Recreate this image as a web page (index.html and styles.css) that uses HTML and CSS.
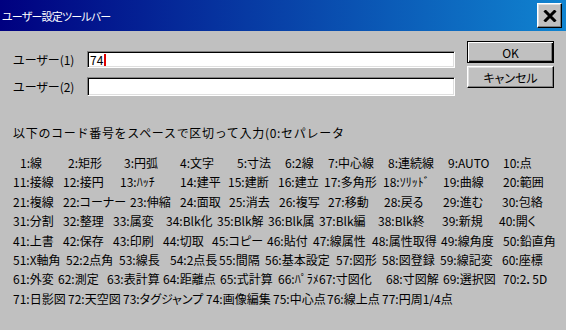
FILE: index.html
```html
<!DOCTYPE html>
<html lang="ja">
<head>
  <meta charset="UTF-8">
  <title>ユーザー設定ツールバー</title>
  <link rel="stylesheet" href="styles.css">
</head>
<body>
  <div class="dialog">
    <!-- タイトルバー -->
    <div class="titlebar">
      <span class="title">ユーザー設定ツールバー</span>
      <button type="button" class="close-btn" aria-label="閉じる">
        <svg width="14" height="12" viewBox="0 0 14 12">
          <path d="M1.5 0.5 L12.5 11.5 M12.5 0.5 L1.5 11.5" stroke="#000" stroke-width="3" />
        </svg>
      </button>
    </div>

    <div class="content">
      <div class="top">
        <div class="fields">
          <label class="field">
            <span class="field-label">ユーザー(1)</span>
            <span class="edit"><span class="edit-text">74</span><span class="caret"></span></span>
          </label>
          <label class="field">
            <span class="field-label">ユーザー(2)</span>
            <span class="edit"></span>
          </label>
        </div>
        <div class="buttons">
          <button type="button" class="btn btn-default">OK</button>
          <button type="button" class="btn">キャンセル</button>
        </div>
      </div>

      <p class="hint">以下のコード番号をスペースで区切って入力(0:セパレータ</p>

      <!-- コード一覧 -->
      <div class="codes">
        <div class="row r1">
          <span>1:線</span><span>2:矩形</span><span>3:円弧</span><span>4:文字</span><span>5:寸法</span><span>6:2線</span><span>7:中心線</span><span>8:連続線</span><span>9:AUTO</span><span>10:点</span>
        </div>
        <div class="row r2">
          <span>11:接線</span><span>12:接円</span><span>13:ﾊｯﾁ</span><span>14:建平</span><span>15:建断</span><span>16:建立</span><span>17:多角形</span><span>18:ｿﾘｯﾄﾞ</span><span>19:曲線</span><span>20:範囲</span>
        </div>
        <div class="row r3">
          <span>21:複線</span><span>22:コーナー</span><span>23:伸縮</span><span>24:面取</span><span>25:消去</span><span>26:複写</span><span>27:移動</span><span>28:戻る</span><span>29:進む</span><span>30:包絡</span>
        </div>
        <div class="row r4">
          <span>31:分割</span><span>32:整理</span><span>33:属変</span><span>34:Blk化</span><span>35:Blk解</span><span>36:Blk属</span><span>37:Blk編</span><span>38:Blk終</span><span>39:新規</span><span>40:開く</span>
        </div>
        <div class="row r5">
          <span>41:上書</span><span>42:保存</span><span>43:印刷</span><span>44:切取</span><span>45:コピー</span><span>46:貼付</span><span>47:線属性</span><span>48:属性取得</span><span>49:線角度</span><span>50:鉛直角</span>
        </div>
        <div class="row r6">
          <span>51:X軸角</span><span>52:2点角</span><span>53:線長</span><span>54:2点長</span><span>55:間隔</span><span>56:基本設定</span><span>57:図形</span><span>58:図登録</span><span>59:線記変</span><span>60:座標</span>
        </div>
        <div class="row r7">
          <span>61:外変</span><span>62:測定</span><span>63:表計算</span><span>64:距離点</span><span>65:式計算</span><span>66:ﾊﾟﾗﾒ</span><span>67:寸図化</span><span>68:寸図解</span><span>69:選択図</span><span>70:2．5D</span>
        </div>
        <div class="row r8">
          <span>71:日影図</span><span>72:天空図</span><span>73:タグジャンプ</span><span>74:画像編集</span><span>75:中心点</span><span>76:線上点</span><span>77:円周1/4点</span>
        </div>
      </div>
    </div>
  </div>
</body>
</html>
```
FILE: styles.css
```css
body {
  margin: 0;
  background: #c0c0c0;
  font-family: "Liberation Sans Narrow", "Noto Sans CJK JP", sans-serif;
  font-size: 12px;
  font-feature-settings: "palt";
  color: #000;
}
.dialog {
  width: 566px;
  height: 330px;
  overflow: hidden;
}

/* title bar */
.titlebar {
  height: 31px;
  display: flex;
  align-items: center;
  justify-content: space-between;
  padding: 0 4px 0 2px;
  box-sizing: border-box;
  background: linear-gradient(to right, #000080, #1084d0);
}
.title {
  color: #fff;
  font-family: "Noto Sans CJK JP", sans-serif;
  font-size: 11px;
  letter-spacing: -0.8px;
}
.close-btn {
  width: 25px;
  height: 25px;
  padding: 0;
  display: flex;
  align-items: center;
  justify-content: center;
  background: #c0c0c0;
  border: 1px solid;
  border-color: #fff #000 #000 #fff;
  box-shadow: inset -1px -1px #808080, inset 1px 1px #dfdfdf;
}

/* top part */
.content {
  padding: 10px 12px 0 13px;
}
.top {
  display: flex;
  gap: 12px;
}
.fields {
  flex: 1;
  display: flex;
  flex-direction: column;
  gap: 9px;
  margin-top: 10px;
}
.field {
  display: flex;
  align-items: center;
}
.field-label {
  width: 74px;
}
.edit {
  flex: 1;
  height: 17px;
  box-sizing: border-box;
  display: flex;
  align-items: center;
  padding-left: 2px;
  background: #fff;
  border: 1px solid;
  border-color: #808080 #fff #fff #808080;
  box-shadow: inset 1px 1px #000, inset -1px -1px #dfdfdf;
}
.field:last-child .edit {
  height: 19px;
}
.edit-text {
  line-height: 13px;
}
.caret {
  width: 2px;
  height: 12px;
  margin-left: 1px;
  background: #e00000;
}
.buttons {
  display: flex;
  flex-direction: column;
  gap: 3px;
}
.btn {
  width: 87px;
  height: 22px;
  padding: 0;
  font: inherit;
  background: #c0c0c0;
  border: 1px solid;
  border-color: #fff #000 #000 #fff;
  box-shadow: inset -1px -1px #808080, inset 1px 1px #dfdfdf;
}
.btn-default {
  border-color: #000;
  box-shadow: inset 1px 1px #fff, inset -1px -1px #000, inset -2px -2px #808080;
}

/* hint and code list */
.hint {
  margin: 29px 0 0;
  line-height: 16px;
  font-feature-settings: normal;
  letter-spacing: 0.7px;
}
.codes {
  margin-top: 12px;
}
.row {
  display: grid;
  height: 19.4px;
  line-height: 19.4px;
  white-space: nowrap;
}
.r1 { padding-left: 7px; grid-template-columns: 48px 56px 56px 57px 48px 43px 60px 60px 55px auto; }
.r2 { grid-template-columns: 50px 57px 60px 48px 50px 46px 59px 60px 60px auto; }
.r3 { grid-template-columns: 50px 67px 50px 49px 50px 49px 56px 59px 59px auto; }
.r4 { grid-template-columns: 50px 50px 53px 51px 51px 51px 59px 64px 57px auto; }
.r5 { grid-template-columns: 50px 50px 50px 49px 55px 46px 59px 69px 62px auto; }
.r6 { grid-template-columns: 53px 53px 51px 49px 46px 71px 46px 58px 62px auto; }
.r7 { grid-template-columns: 45px 49px 56px 57px 58px 41px 67px 57px 60px auto; }
.r8 { grid-template-columns: 55px 55px 83px 67px 54px 55px auto; }
```
